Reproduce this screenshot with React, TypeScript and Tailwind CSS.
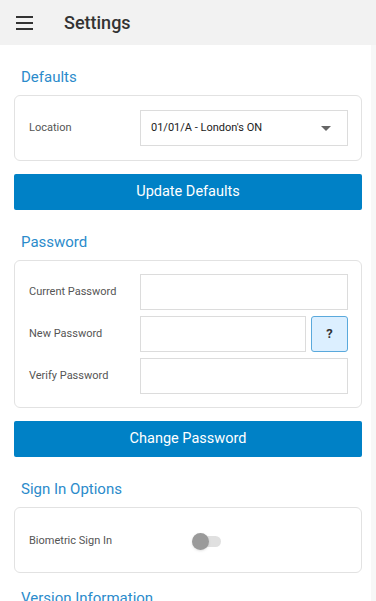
import React, { useState } from 'react';

const SectionTitle: React.FC<{ children: React.ReactNode; className?: string }> = ({ children, className = 'pt-[23px]' }) => (
  <h2 className={`px-[21px] pb-[9px] text-[15px] leading-[18px] text-[#2b8bcb] ${className}`}>{children}</h2>
);

const Card: React.FC<{ children: React.ReactNode }> = ({ children }) => (
  <div className="mx-[14px] rounded-[6px] border border-[#e2e2e2] bg-white">{children}</div>
);

const FieldRow: React.FC<{ label: string; children: React.ReactNode }> = ({ label, children }) => (
  <div className="flex items-center">
    <label className="w-[125px] shrink-0 pl-[14px] text-[11px] text-[#555]">{label}</label>
    <div className="flex min-w-0 flex-1 gap-[5px] pr-[13px]">{children}</div>
  </div>
);

const TextBox = () => (
  <input type="password" className="h-[36px] w-0 min-w-0 flex-1 border border-[#dcdcdc] bg-white px-2 text-[12px] outline-none" />
);

const App: React.FC = () => {
  const [biometric, setBiometric] = useState(false);

  return (
    <div className="h-[601px] overflow-hidden bg-white font-['Roboto',sans-serif] text-[#333] shadow-[inset_-5px_0_0_#f7f7f7]">
      <header className="flex h-[45px] items-center bg-[#f2f2f2]">
        <button className="ml-[16px] flex flex-col gap-[4px]">
          <span className="block h-[2px] w-[17px] bg-[#333]" />
          <span className="block h-[2px] w-[17px] bg-[#333]" />
          <span className="block h-[2px] w-[17px] bg-[#333]" />
        </button>
        <h1 className="ml-[31px] text-[18px] font-medium text-[#333]">Settings</h1>
      </header>

      <SectionTitle>Defaults</SectionTitle>
      <Card>
        <div className="py-[14px]">
          <FieldRow label="Location">
            <div className="flex h-[36px] flex-1 items-center justify-between border border-[#dcdcdc] pl-[10px] pr-[16px] text-[11px] text-[#222]">
              <span>01/01/A - London's ON</span>
              <span className="h-0 w-0 border-x-[5px] border-t-[5px] border-x-transparent border-t-[#666]" />
            </div>
          </FieldRow>
        </div>
      </Card>

      <button className="mx-[14px] mt-[13px] flex h-[36px] w-[348px] items-center justify-center rounded-[2px] bg-[#0081c6] text-[14.5px] text-white">
        Update Defaults
      </button>

      <SectionTitle>Password</SectionTitle>
      <Card>
        <div className="flex flex-col gap-[6px] py-[13px]">
          <FieldRow label="Current Password">
            <TextBox />
          </FieldRow>
          <FieldRow label="New Password">
            <TextBox />
            <button className="flex h-[36px] w-[37px] shrink-0 items-center justify-center rounded-[3px] border border-[#5aa9dc] bg-[#dcefff] text-[13px] font-bold text-[#333]">
              ?
            </button>
          </FieldRow>
          <FieldRow label="Verify Password">
            <TextBox />
          </FieldRow>
        </div>
      </Card>

      <button className="mx-[14px] mt-[13px] flex h-[36px] w-[348px] items-center justify-center rounded-[2px] bg-[#0081c6] text-[14.5px] text-white">
        Change Password
      </button>

      <SectionTitle>Sign In Options</SectionTitle>
      <Card>
        <div className="flex h-[64px] items-center">
          <span className="w-[177px] shrink-0 pl-[14px] pt-[2px] text-[11px] text-[#555]">Biometric Sign In</span>
          <button
            onClick={() => setBiometric(!biometric)}
            className="relative mt-[2px] h-[15px] w-[29px]"
          >
            <span className={`absolute left-[2px] top-[2px] h-[11px] w-[27px] rounded-full ${biometric ? 'bg-[#8cc8ea]' : 'bg-[#e0e0e0]'}`} />
            <span className={`absolute top-0 h-[17px] w-[17px] -translate-y-[1px] rounded-full shadow-sm ${biometric ? 'left-[13px] bg-[#0081c6]' : 'left-0 bg-[#9a9a9a]'}`} />
          </button>
        </div>
      </Card>

      <SectionTitle className="pt-[16px]">Version Information</SectionTitle>
    </div>
  );
};

export default App;
